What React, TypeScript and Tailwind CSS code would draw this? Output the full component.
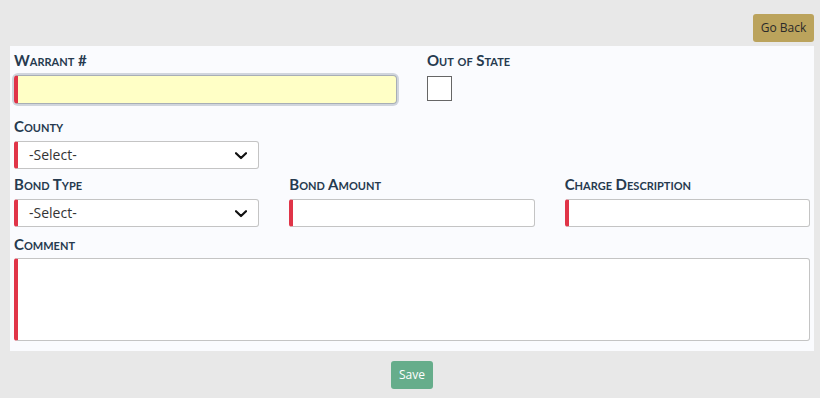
import React from "react";

const labelCls =
  "block h-[18px] leading-[18px] text-[15px] font-bold text-[#263a4f] [font-variant:small-caps] [font-family:Lato,'Liberation_Sans',sans-serif] whitespace-nowrap";

function Chevron() {
  return (
    <svg width="12" height="8" viewBox="0 0 12 8" className="absolute right-[11px] top-[10px]">
      <path d="M1 1.2 L6 6 L11 1.2" fill="none" stroke="#111" strokeWidth="2.2" strokeLinecap="round" strokeLinejoin="round" />
    </svg>
  );
}

function Select() {
  return (
    <div className="relative h-[28px] w-[245px] rounded-[3px] border border-[#c4c4c4] border-l-[4px] border-l-[#e03448] bg-white">
      <span className="absolute left-[11px] top-[4px] text-[14px] leading-[18px] text-[#333] [font-family:'Open_Sans',sans-serif]">
        -Select-
      </span>
      <Chevron />
    </div>
  );
}

function Input() {
  return (
    <div className="h-[28px] w-full rounded-[3px] border border-[#c4c4c4] border-l-[4px] border-l-[#e03448] bg-white" />
  );
}

export default function App() {
  return (
    <div className="min-h-[398px] w-[820px] bg-[#e8e8e8] pt-[14px] [font-family:'Open_Sans',sans-serif]">
      <div className="flex justify-end pr-[6px]">
        <button className="h-[28px] w-[61px] rounded-[3px] bg-[#bba35c] text-[12px] text-[#2a2a2a]">
          Go Back
        </button>
      </div>
      <div className="ml-[10px] mt-[4px] w-[804px] bg-[#fafbfe] px-[4px] pb-[10px] pt-[5px]">
        <div className="grid grid-cols-2 gap-x-[30px]">
          <div>
            <span className={labelCls}>Warrant #</span>
            <div className="mt-[6px] h-[29px] rounded-[4px] border border-[#a7aeb6] border-l-[4px] border-l-[#e03448] bg-[#ffffc6] shadow-[0_0_0_2px_#d0d5dd]" />
          </div>
          <div>
            <span className={labelCls}>Out of State</span>
            <div className="mt-[7px] h-[25px] w-[25px] border border-[#666] bg-white" />
          </div>
        </div>
        <div className="mt-[13px]">
          <span className={labelCls}>County</span>
          <div className="mt-[6px]">
            <Select />
          </div>
        </div>
        <div className="mt-[6px] grid grid-cols-3 gap-x-[30px]">
          <div>
            <span className={labelCls}>Bond Type</span>
            <div className="mt-[6px]">
              <Select />
            </div>
          </div>
          <div>
            <span className={labelCls}>Bond Amount</span>
            <div className="mt-[6px]">
              <Input />
            </div>
          </div>
          <div>
            <span className={labelCls}>Charge Description</span>
            <div className="mt-[6px]">
              <Input />
            </div>
          </div>
        </div>
        <div className="mt-[8px]">
          <span className={labelCls}>Comment</span>
          <div className="mt-[5px] h-[83px] rounded-[3px] border border-[#c4c4c4] border-l-[4px] border-l-[#e03448] bg-white" />
        </div>
      </div>
      <div className="ml-[10px] flex w-[804px] justify-center pt-[10px]">
        <button className="h-[28px] w-[42px] rounded-[3px] bg-[#66ad8b] text-[12px] text-white">
          Save
        </button>
      </div>
    </div>
  );
}
